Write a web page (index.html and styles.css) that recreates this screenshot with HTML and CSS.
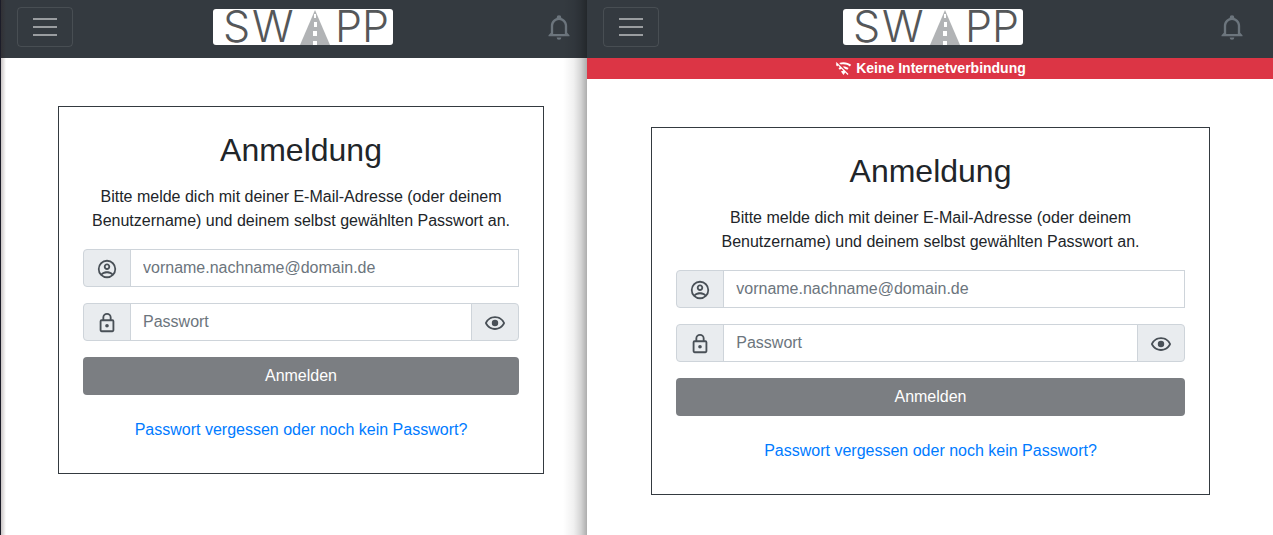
FILE: index.html
```
<!DOCTYPE html>
<html lang="de">
<head>
<meta charset="utf-8">
<meta name="viewport" content="width=device-width, initial-scale=1">
<title>SWAPP – Anmeldung</title>
<link rel="stylesheet" href="styles.css">
</head>
<body>
<svg class="defs" aria-hidden="true">
  <symbol id="i-bell" viewBox="0 0 24 24"><path d="M10 21H14A2 2 0 0 1 12 23A2 2 0 0 1 10 21M21 19V20H3V19L5 17V11C5 7.9 7.03 5.17 10 4.29V4A2 2 0 0 1 14 4V4.29C16.97 5.17 19 7.9 19 11V17L21 19M17 11A5 5 0 0 0 7 11V18H17V11Z"/></symbol>
  <symbol id="i-account" viewBox="0 0 24 24"><path d="M12 2A10 10 0 0 0 2 12A10 10 0 0 0 12 22A10 10 0 0 0 22 12A10 10 0 0 0 12 2M7.07 18.28C7.5 17.38 10.12 16.5 12 16.5S16.5 17.38 16.93 18.28C15.57 19.36 13.86 20 12 20S8.43 19.36 7.07 18.28M18.36 16.83C16.93 15.09 13.46 14.5 12 14.5S7.07 15.09 5.64 16.83C4.62 15.5 4 13.82 4 12C4 7.59 7.59 4 12 4S20 7.59 20 12C20 13.82 19.38 15.5 18.36 16.83M12 6C10.06 6 8.5 7.56 8.5 9.5S10.06 13 12 13S15.5 11.44 15.5 9.5S13.94 6 12 6M12 11A1.5 1.5 0 0 1 12 8A1.5 1.5 0 0 1 12 11Z"/></symbol>
  <symbol id="i-lock" viewBox="0 0 24 24"><path d="M12 17A2 2 0 0 1 12 13A2 2 0 0 1 12 17M18 20V10H6V20H18M18 8A2 2 0 0 1 20 10V20A2 2 0 0 1 18 22H6A2 2 0 0 1 4 20V10A2 2 0 0 1 6 8H7V6A5 5 0 0 1 17 6V8H18M12 3A3 3 0 0 0 9 6V8H15V6A3 3 0 0 0 12 3Z"/></symbol>
  <symbol id="i-eye" viewBox="0 0 24 24"><path d="M12 8.5A3.5 3.5 0 0 1 12 15.5A3.5 3.5 0 0 1 12 8.5M12 4.5C17 4.5 21.27 7.61 23 12C21.27 16.39 17 19.5 12 19.5S2.73 16.39 1 12C2.73 7.61 7 4.5 12 4.5M3.18 12A9.82 9.82 0 0 0 20.82 12A9.82 9.82 0 0 0 3.18 12Z"/></symbol>
  <symbol id="i-wifi-off" viewBox="0 0 24 24"><path d="M2.28 3L1 4.27L2.47 5.74C2.04 6 1.61 6.29 1.2 6.6L3 9C3.53 8.6 4.08 8.25 4.66 7.93L6.89 10.16C6.15 10.5 5.44 10.91 4.8 11.4L6.6 13.8C7.38 13.22 8.26 12.77 9.2 12.47L11.75 15C10.5 15.07 9.34 15.5 8.4 16.2L12 21L14.46 17.73L17.74 21L19 19.72M12 3C9.85 3 7.8 3.38 5.9 4.07L8.29 6.47C9.5 6.16 10.72 6 12 6C15.38 6 18.5 7.11 21 9L22.8 6.6C19.79 4.34 16.06 3 12 3M12 9C11.62 9 11.25 9 10.88 9.05L14.07 12.25C15.29 12.53 16.43 13.07 17.4 13.8L19.2 11.4C17.2 9.89 14.7 9 12 9Z"/></symbol>
  <symbol id="i-menu" viewBox="0 0 30 30"><path d="M3 7H27M3 15H27M3 23H27" stroke="currentColor" stroke-width="2"/></symbol>
</svg>
<main class="screens">
  <section class="screen screen-online">
    <div class="app">
      <header class="navbar">
        <button class="toggler" type="button" aria-label="Menü"><svg class="icon-menu"><use href="#i-menu"/></svg></button>
        <a class="brand" href="#" aria-label="SWAPP">
          <svg class="logo" viewBox="0 0 180 36">
            <text x="10" y="33">S</text><text x="39" y="33">W</text><text x="122" y="33">PP</text>
            <path d="M102 1L117 36H87Z" fill="#b1b3b5"/>
            <path d="M101 5h2v4h-2zM101 13h3v5h-3zM100 22h4v5h-4zM100 32h4v4h-4z" fill="#fff"/>
          </svg>
        </a>
        <button class="bell" type="button" aria-label="Benachrichtigungen"><svg class="icon-bell"><use href="#i-bell"/></svg></button>
      </header>
      <form class="card">
        <h1 class="title">Anmeldung</h1>
        <p class="intro">Bitte melde dich mit deiner E-Mail-Adresse (oder deinem Benutzername) und deinem selbst gewählten Passwort an.</p>
        <div class="group">
          <label class="addon" for="user-a" aria-label="Benutzername"><svg class="icon"><use href="#i-account"/></svg></label>
          <input class="field" id="user-a" type="text" placeholder="vorname.nachname@domain.de">
        </div>
        <div class="group">
          <label class="addon" for="pass-a" aria-label="Passwort"><svg class="icon"><use href="#i-lock"/></svg></label>
          <input class="field" id="pass-a" type="password" placeholder="Passwort">
          <button class="addon addon-end" type="button" aria-label="Passwort anzeigen"><svg class="icon"><use href="#i-eye"/></svg></button>
        </div>
        <button class="submit" type="submit">Anmelden</button>
        <a class="forgot" href="#">Passwort vergessen oder noch kein Passwort?</a>
      </form>
    </div>
  </section>
  <section class="screen screen-offline">
    <div class="app">
      <header class="navbar">
        <button class="toggler" type="button" aria-label="Menü"><svg class="icon-menu"><use href="#i-menu"/></svg></button>
        <a class="brand" href="#" aria-label="SWAPP">
          <svg class="logo" viewBox="0 0 180 36">
            <text x="10" y="33">S</text><text x="39" y="33">W</text><text x="122" y="33">PP</text>
            <path d="M102 1L117 36H87Z" fill="#b1b3b5"/>
            <path d="M101 5h2v4h-2zM101 13h3v5h-3zM100 22h4v5h-4zM100 32h4v4h-4z" fill="#fff"/>
          </svg>
        </a>
        <button class="bell" type="button" aria-label="Benachrichtigungen"><svg class="icon-bell"><use href="#i-bell"/></svg></button>
      </header>
      <div class="offline" role="alert"><svg class="icon-wifi"><use href="#i-wifi-off"/></svg><span>Keine Internetverbindung</span></div>
      <form class="card">
        <h1 class="title">Anmeldung</h1>
        <p class="intro">Bitte melde dich mit deiner E-Mail-Adresse (oder deinem Benutzername) und deinem selbst gewählten Passwort an.</p>
        <div class="group">
          <label class="addon" for="user-b" aria-label="Benutzername"><svg class="icon"><use href="#i-account"/></svg></label>
          <input class="field" id="user-b" type="text" placeholder="vorname.nachname@domain.de">
        </div>
        <div class="group">
          <label class="addon" for="pass-b" aria-label="Passwort"><svg class="icon"><use href="#i-lock"/></svg></label>
          <input class="field" id="pass-b" type="password" placeholder="Passwort">
          <button class="addon addon-end" type="button" aria-label="Passwort anzeigen"><svg class="icon"><use href="#i-eye"/></svg></button>
        </div>
        <button class="submit" type="submit">Anmelden</button>
        <a class="forgot" href="#">Passwort vergessen oder noch kein Passwort?</a>
      </form>
    </div>
  </section>
</main>
</body>
</html>
```
FILE: styles.css
```
*,
*::before {
  box-sizing: border-box;
}

body {
  margin: 0;
  font: 16px/24px "Liberation Sans", Arial, sans-serif;
  color: #212529;
  background: #fff;
}

.defs {
  position: absolute;
  width: 0;
  height: 0;
}

svg {
  display: block;
  fill: currentColor;
}

.screens {
  display: grid;
  grid-template-columns: 587fr 686fr;
  min-height: 100vh;
  overflow: hidden;
}

.screen {
  min-width: 0;
  background: #fff;
}

/* the left window continues a little behind the right one */
.screen-online {
  border-left: 1px solid #1b1c28;
}

.screen-online .app {
  position: relative;
  min-height: 100%;
  margin-right: -14px;
}

.screen-online .app::before {
  content: "";
  position: absolute;
  top: 0;
  bottom: 0;
  left: 0;
  width: 5px;
  background: linear-gradient(to right, rgba(40, 20, 20, 0.25), rgba(40, 20, 20, 0));
}

.screen-offline {
  position: relative;
}

/* shadow that the right window casts on the left one */
.screen-offline::before {
  content: "";
  position: absolute;
  top: 0;
  bottom: 0;
  right: 100%;
  width: 24px;
  background: linear-gradient(to left, rgba(0, 0, 0, 0.32), rgba(0, 0, 0, 0.17) 25%, rgba(0, 0, 0, 0.06) 55%, rgba(0, 0, 0, 0));
}

.screen-offline .app {
  margin-right: -1px;
}

.navbar {
  display: flex;
  align-items: center;
  justify-content: space-between;
  padding: 7px 16px 11px;
  background: #343a40;
}

.toggler {
  display: flex;
  padding: 4px 12px;
  border: 1px solid rgba(255, 255, 255, 0.1);
  border-radius: 4px;
  background: none;
  color: rgba(255, 255, 255, 0.5);
}

.icon-menu {
  width: 30px;
  height: 30px;
}

.brand {
  border-radius: 3px;
  background: #fff;
}

.logo {
  width: 180px;
  height: 36px;
  overflow: visible;
  fill: #555759;
  font: 300 43px Inter, "Liberation Sans", sans-serif;
}

.bell {
  padding: 0 12px;
  border: 0;
  background: none;
  color: #6c757d;
}

.icon-bell {
  width: 28px;
  height: 28px;
}

.offline {
  display: flex;
  align-items: center;
  justify-content: center;
  gap: 4px;
  background: #dc3545;
  color: #fff;
  font-size: 14px;
  font-weight: 700;
  line-height: 21px;
}

.icon-wifi {
  width: 17px;
  height: 17px;
}

.card {
  display: flex;
  flex-direction: column;
  gap: 16px;
  width: calc(100% * 5 / 6 - 14px);
  margin: 48px auto;
  padding: 24px;
  border: 1px solid #343a40;
  text-align: center;
}

.title {
  margin: 0;
  font-size: 32px;
  font-weight: 400;
  line-height: 38px;
}

.intro {
  margin: 0;
}

.group {
  display: flex;
}

.addon {
  display: flex;
  align-items: center;
  justify-content: center;
  flex: none;
  width: 48px;
  height: 38px;
  padding: 2px 0 0;
  border: 1px solid #ced4da;
  border-radius: 4px 0 0 4px;
  background: #e9ecef;
  color: #495057;
}

.addon-end {
  margin-left: -1px;
  border-radius: 0 4px 4px 0;
}

.icon {
  width: 22px;
  height: 22px;
}

.field {
  flex: 1;
  min-width: 0;
  height: 38px;
  margin-left: -1px;
  padding: 6px 12px;
  border: 1px solid #ced4da;
  border-radius: 0;
  background: #fff;
  color: #495057;
  font: inherit;
}

.field::placeholder {
  color: #6c757d;
  opacity: 1;
}

.submit {
  height: 38px;
  padding: 0 12px;
  border: 0;
  border-radius: 4px;
  background: #7b7e82;
  color: #fff;
  font: inherit;
}

.forgot {
  padding: 7px 12px;
  color: #007bff;
  text-decoration: none;
}
```
